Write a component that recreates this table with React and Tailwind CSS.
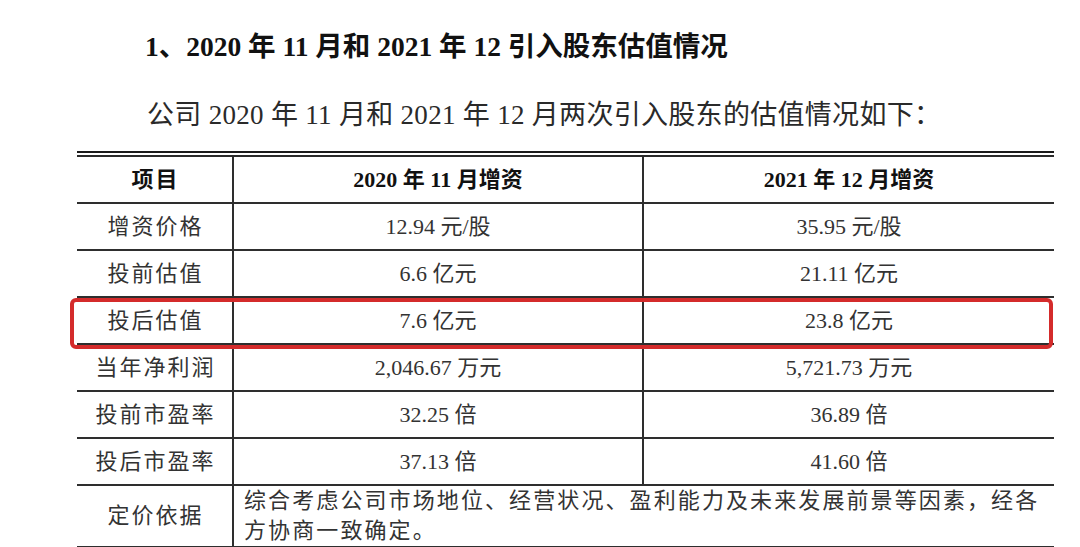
import React from 'react'

const serif = "font-['Liberation_Serif','Noto_Sans_CJK_SC',serif]"

const rows = [
  ['增资价格', '12.94 元/股', '35.95 元/股'],
  ['投前估值', '6.6 亿元', '21.11 亿元'],
  ['投后估值', '7.6 亿元', '23.8 亿元'],
  ['当年净利润', '2,046.67 万元', '5,721.73 万元'],
  ['投前市盈率', '32.25 倍', '36.89 倍'],
  ['投后市盈率', '37.13 倍', '41.60 倍'],
]

function Cell({ children, right, bold, track }) {
  return (
    <div
      className={`h-[47px] flex items-center justify-center border-b-2 border-[#2e2e2e] ${right ? 'border-r-2' : ''} ${bold ? 'font-bold text-[#111]' : 'text-[#333]'} ${track ? 'tracking-[2px] pl-[2px]' : ''}`}
    >
      {children}
    </div>
  )
}

export default function App() {
  return (
    <div className={`w-[1080px] h-[547px] bg-white overflow-hidden ${serif}`}>
      <h1 className="pt-[29px] pl-[145px] text-[27.5px] leading-[36px] font-bold text-[#111]">
        1、2020 年 11 月和 2021 年 12 引入股东估值情况
      </h1>
      <p className="mt-[32px] pl-[147px] text-[27px] leading-[36px] tracking-[0.3px] text-[#2a2a2a]">
        公司 2020 年 11 月和 2021 年 12 月两次引入股东的估值情况如下：
      </p>

      <div className="relative ml-[77px] mt-[18px] w-[977px]">
        <div className="h-[2px] bg-[#1a1a1a]"></div>
        <div className="h-[2px]"></div>
        <div className="h-[1.5px] bg-[#2a2a2a]"></div>

        <div className="grid grid-cols-[157px_410px_410px] text-[22px]">
          <Cell right bold track>项目</Cell>
          <Cell right bold>2020 年 11 月增资</Cell>
          <Cell bold>2021 年 12 月增资</Cell>

          {rows.map((r) => (
            <React.Fragment key={r[0]}>
              <Cell right track>{r[0]}</Cell>
              <Cell right>{r[1]}</Cell>
              <Cell>{r[2]}</Cell>
            </React.Fragment>
          ))}

          <div className="h-[62px] flex items-center justify-center border-b-2 border-r-2 border-[#2e2e2e] text-[#333] tracking-[2px] pl-[2px]">
            定价依据
          </div>
          <div className="col-span-2 h-[62px] flex flex-col justify-center pl-[10px] border-b-2 border-[#2e2e2e] text-[#333] tracking-[2.1px] leading-[30px]">
            <span>综合考虑公司市场地位、经营状况、盈利能力及未来发展前景等因素，经各</span>
            <span>方协商一致确定。</span>
          </div>
        </div>

        {/* red highlight over the 投后估值 row */}
        <div className="absolute left-[-7px] right-[1px] top-[147px] h-[51px] border-4 border-[#d42b2b] rounded-[6px]"></div>
      </div>
    </div>
  )
}
